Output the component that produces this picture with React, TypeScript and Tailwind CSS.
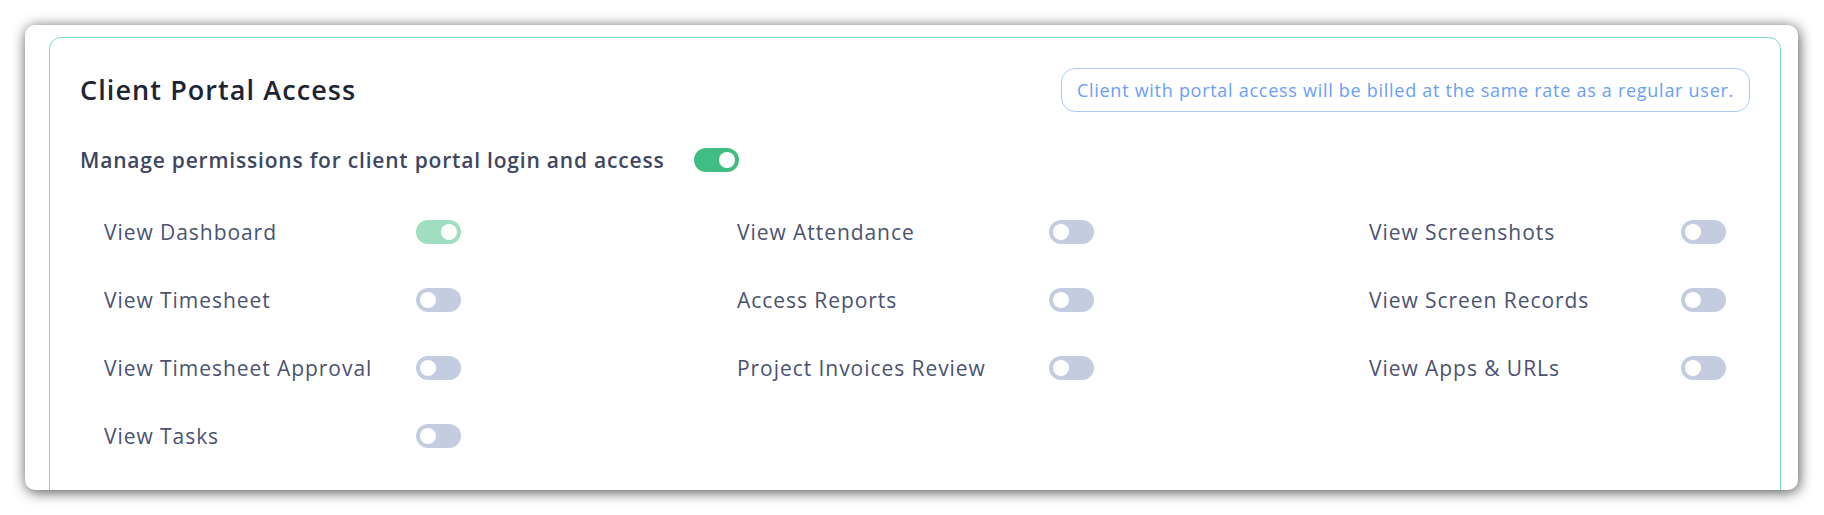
import React from "react";

type Perm = { label: string; on?: boolean };

const columns: Perm[][] = [
  [
    { label: "View Dashboard", on: true },
    { label: "View Timesheet" },
    { label: "View Timesheet Approval" },
    { label: "View Tasks" },
  ],
  [
    { label: "View Attendance" },
    { label: "Access Reports" },
    { label: "Project Invoices Review" },
  ],
  [
    { label: "View Screenshots" },
    { label: "View Screen Records" },
    { label: "View Apps & URLs" },
  ],
];

const Toggle = ({ on, strong }: { on?: boolean; strong?: boolean }) => {
  const track = strong ? "bg-[#40bd82]" : on ? "bg-[#9fdec1]" : "bg-[#c4cce0]";
  return (
    <span
      className={`relative inline-flex h-[24px] w-[45px] shrink-0 items-center rounded-full ${track} ${
        on ? "justify-end" : "justify-start"
      } px-[4px]`}
    >
      <span className="h-[16px] w-[16px] rounded-full bg-white" />
    </span>
  );
};

const App = () => {
  return (
    <div className="min-h-[515px] bg-white pt-[25px] pl-[25px] pr-[26px] font-['Open_Sans',sans-serif]">
      <div className="h-[465px] overflow-hidden rounded-[10px] bg-white shadow-[1px_2px_14px_rgba(0,0,0,0.7)] pt-[12px] pl-[24px] pr-[17px]">
        <div className="h-[520px] rounded-[12px] border border-[#7dd8cb] p-[30px]">
          <div className="flex items-center justify-between">
            <h2 className="text-[27px] leading-[32px] font-semibold tracking-[0.04em] text-[#1e2433]">
              Client Portal Access
            </h2>
            <div className="flex h-[44px] items-center rounded-[14px] border border-[#a9c9fb] px-[15px] text-[18px] tracking-[0.04em] text-[#6b9ef7]">
              Client with portal access will be billed at the same rate as a regular user.
            </div>
          </div>

          <div className="mt-[36px] flex h-[24px] items-center gap-[30px]">
            <span className="text-[21px] leading-[24px] font-semibold tracking-[0.038em] text-[#3e4660]">
              Manage permissions for client portal login and access
            </span>
            <Toggle on strong />
          </div>

          <div className="mt-[48px] grid grid-cols-[633px_632px_1fr] pl-[24px]">
            {columns.map((col, i) => (
              <div key={i} className="flex flex-col gap-[44px]">
                {col.map((p) => (
                  <div key={p.label} className="flex h-[24px] items-center">
                    <span className="w-[312px] text-[21px] leading-[24px] font-medium tracking-[0.045em] text-[#4a5270]">
                      {p.label}
                    </span>
                    <Toggle on={p.on} />
                  </div>
                ))}
              </div>
            ))}
          </div>
        </div>
      </div>
    </div>
  );
};

export default App;
